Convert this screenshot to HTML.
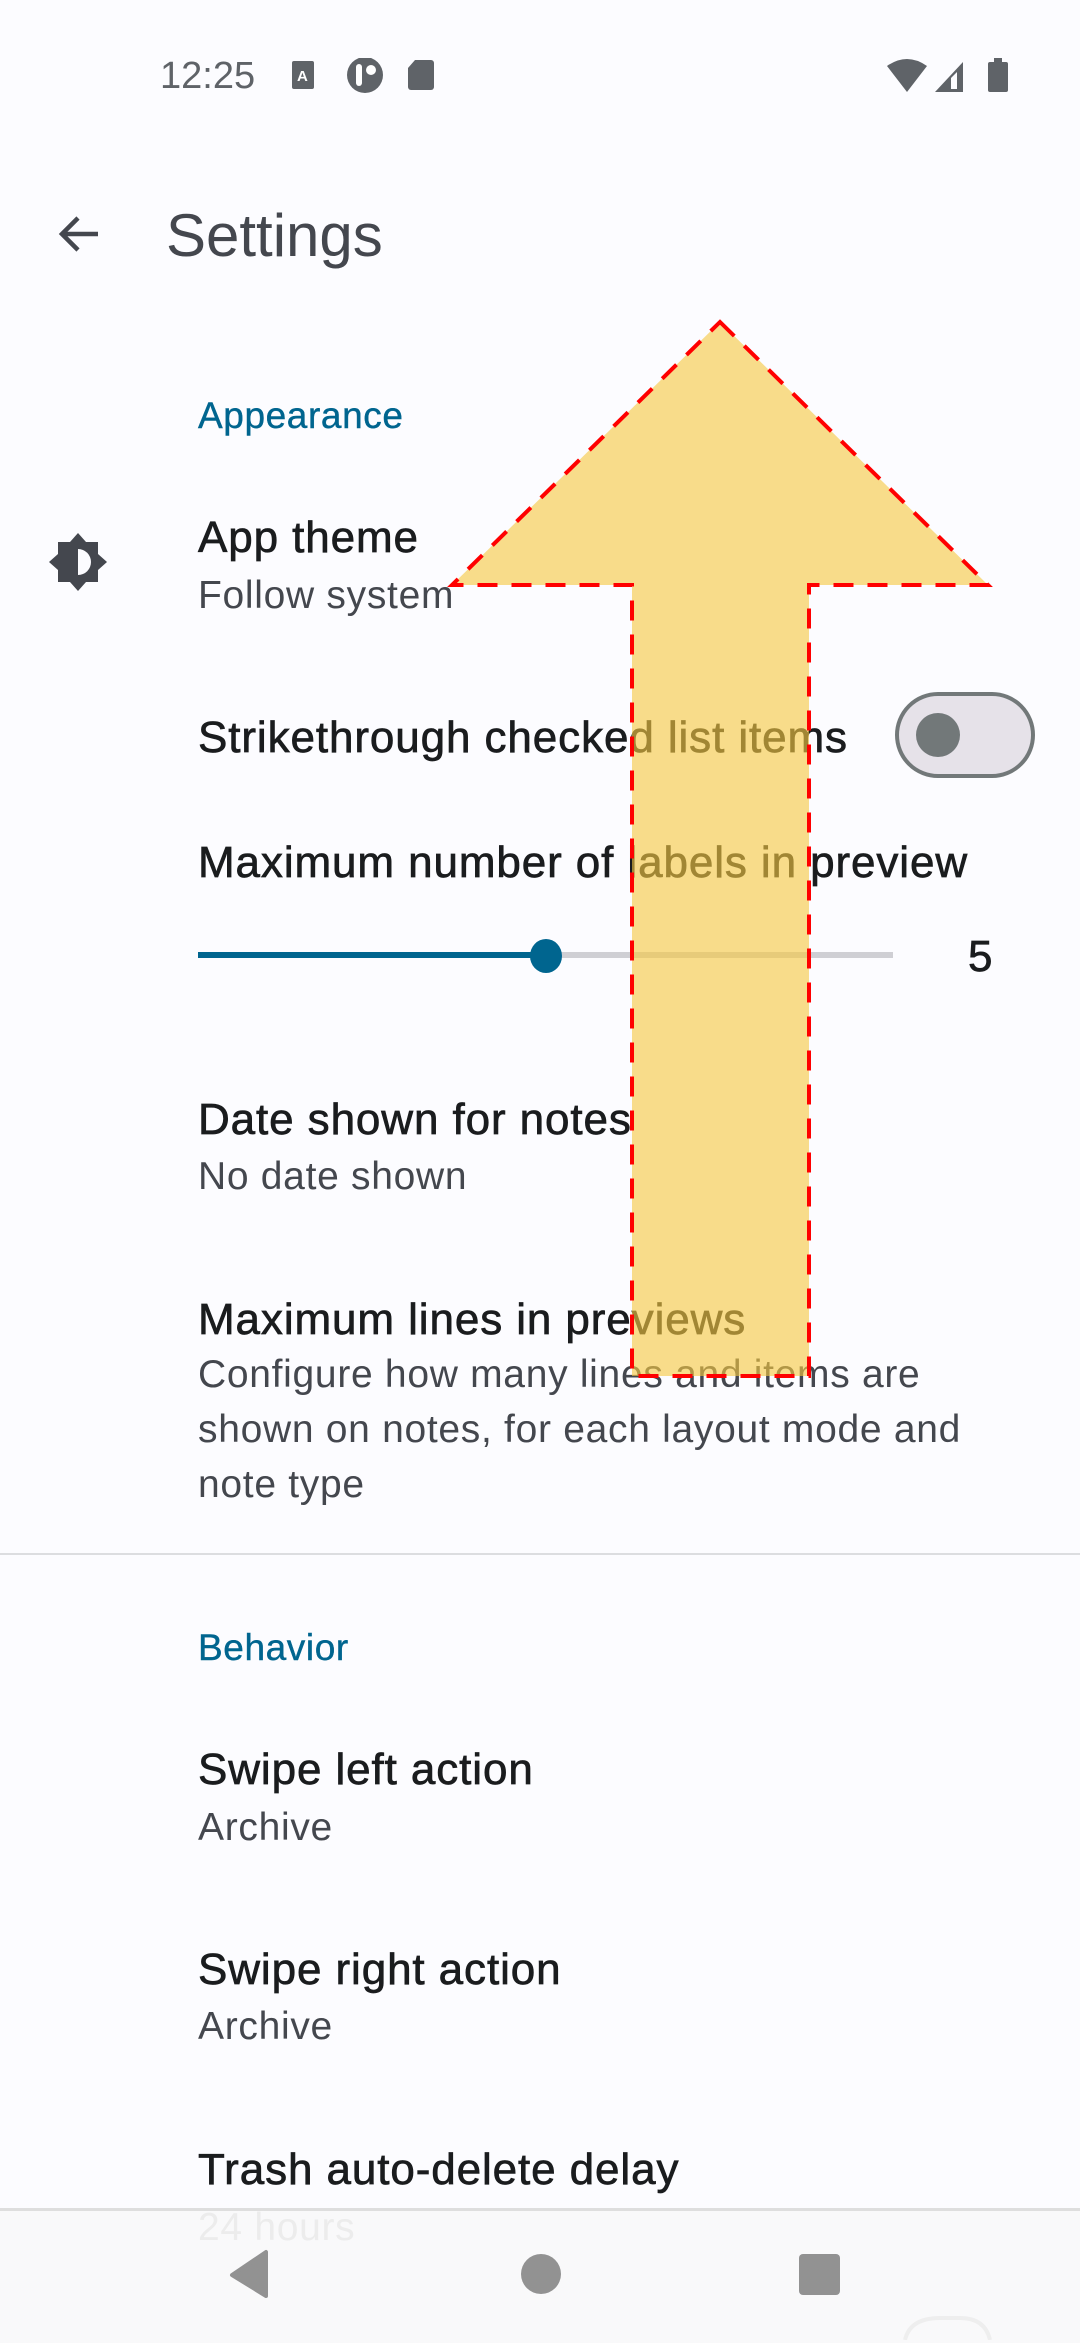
<!DOCTYPE html>
<html><head><meta charset="utf-8"><style>
html,body{margin:0;padding:0}
body{width:1080px;height:2340px;position:relative;overflow:hidden;background:#fcfcff;font-family:"Liberation Sans",sans-serif}
.t{position:absolute;white-space:nowrap;line-height:60px;height:60px}
.title{font-size:44px;letter-spacing:0.9px;color:#1a1c1e;left:198px;-webkit-text-stroke:0.7px #1a1c1e}
.sub{font-size:39px;letter-spacing:0.7px;color:#44474e;left:198px}
.hdr{font-size:37px;letter-spacing:0.6px;color:#00658f;left:198px;-webkit-text-stroke:0.4px #00658f}
</style></head><body>
<!-- status bar -->
<div class="t" style="left:160px;top:46px;font-size:38px;color:#5f6368">12:25</div>
<svg style="position:absolute;left:290px;top:58px" width="160" height="40" viewBox="0 0 160 40">
<rect x="2" y="3" width="22" height="28" rx="2" fill="#5f6368"/><text x="7" y="23" font-size="15" font-family="Liberation Sans" font-weight="bold" fill="#fff">A</text>
<circle cx="75" cy="17" r="18" fill="#5f6368"/><rect x="66" y="6" width="6" height="22" rx="3" fill="#fff"/><circle cx="81" cy="12" r="5" fill="#fff"/>
<path d="M125 2h16a3 3 0 0 1 3 3v24a3 3 0 0 1-3 3h-20a3 3 0 0 1-3-3V10z" fill="#5f6368"/>
</svg>
<svg style="position:absolute;left:885px;top:58px" width="130" height="36" viewBox="0 0 130 36">
<path d="M2 8 Q22 -6 42 8 L22 34Z" fill="#5f6368"/>
<path d="M50 34 L78 4 V34Z" fill="#5f6368"/><path d="M66 20 L72 14 V31 H66Z" fill="#fcfcff"/>
<rect x="103" y="4" width="20" height="30" rx="2" fill="#5f6368"/><rect x="109" y="0" width="8" height="5" fill="#5f6368"/>
</svg>
<!-- app bar -->
<svg style="position:absolute;left:54px;top:210px" width="48" height="48" viewBox="0 0 48 48"><path d="M44 24H8M24 8L8 24l16 16" stroke="#44474e" stroke-width="4.5" fill="none"/></svg>
<div class="t" style="left:166px;top:204px;font-size:60px;line-height:64px;height:64px;color:#44474e">Settings</div>
<!-- content -->
<div class="t hdr" style="top:386px">Appearance</div>
<svg style="position:absolute;left:46px;top:530px" width="64" height="64" viewBox="0 0 64 64">
<path d="M32 3 L40 12 H52 V24 L61 32 L52 40 V52 H40 L32 61 L24 52 H12 V40 L3 32 L12 24 V12 H24Z" fill="#44474e"/>
<path d="M32 19 A13 13 0 0 1 32 45Z" fill="#fcfcff"/></svg>
<div class="t title" style="top:508px">App theme</div>
<div class="t sub" style="top:566px">Follow system</div>
<div class="t title" style="top:708px">Strikethrough checked list items</div>
<div style="position:absolute;left:895px;top:692px;border:4px solid #727879;border-radius:44px;background:#e6e2e9;box-sizing:border-box;width:140px;height:86px"></div>
<div style="position:absolute;left:916px;top:713px;width:44px;height:44px;border-radius:50%;background:#727879"></div>
<div class="t title" style="top:833px">Maximum number of labels in preview</div>
<div style="position:absolute;left:198px;top:952px;width:695px;height:6px;background:#cfcfd4"></div>
<div style="position:absolute;left:198px;top:952px;width:348px;height:6px;background:#00658f"></div>
<div style="position:absolute;left:530px;top:939px;width:32px;height:34px;border-radius:50%;background:#00658f"></div>
<div class="t title" style="left:968px;top:927px">5</div>
<div class="t title" style="top:1090px">Date shown for notes</div>
<div class="t sub" style="top:1147px">No date shown</div>
<div class="t title" style="top:1290px">Maximum lines in previews</div>
<div class="sub" style="position:absolute;top:1347px;line-height:55px;white-space:nowrap">Configure how many lines and items are<br>shown on notes, for each layout mode and<br>note type</div>
<div style="position:absolute;left:0;top:1553px;width:1080px;height:2px;background:#dcdde0"></div>
<div class="t hdr" style="top:1618px">Behavior</div>
<div class="t title" style="top:1740px">Swipe left action</div>
<div class="t sub" style="top:1798px">Archive</div>
<div class="t title" style="top:1940px">Swipe right action</div>
<div class="t sub" style="top:1997px">Archive</div>
<div class="t title" style="top:2140px">Trash auto-delete delay</div>
<!-- nav bar -->
<div style="position:absolute;left:0;top:2208px;width:1080px;height:132px;background:#f9f9fa;border-top:3px solid #dedede"></div>
<div class="t sub" style="top:2198px;color:#ececec">24 hours</div>
<svg style="position:absolute;left:0;top:2240px" width="1080" height="100" viewBox="0 0 1080 100">
<path d="M266 12 V56 L232 35 Z" fill="#929292" stroke="#929292" stroke-width="4" stroke-linejoin="round"/>
<ellipse cx="541" cy="34" rx="20" ry="20" fill="#929292"/>
<rect x="799" y="14" width="41" height="41" rx="4" fill="#929292"/>
<path d="M905 100 Q910 78 940 78 H960 Q985 78 990 100" fill="none" stroke="#eeeeee" stroke-width="4"/>
</svg>
<!-- arrow overlay -->
<svg style="position:absolute;left:0;top:0" width="1080" height="2340" viewBox="0 0 1080 2340">
<path d="M720 322 L988 585 H809 V1376 H632 V585 H452 Z" fill="#f5c842" fill-opacity="0.62" stroke="#ff0000" stroke-width="4" stroke-dasharray="20,14"/>
</svg>
</body></html>
